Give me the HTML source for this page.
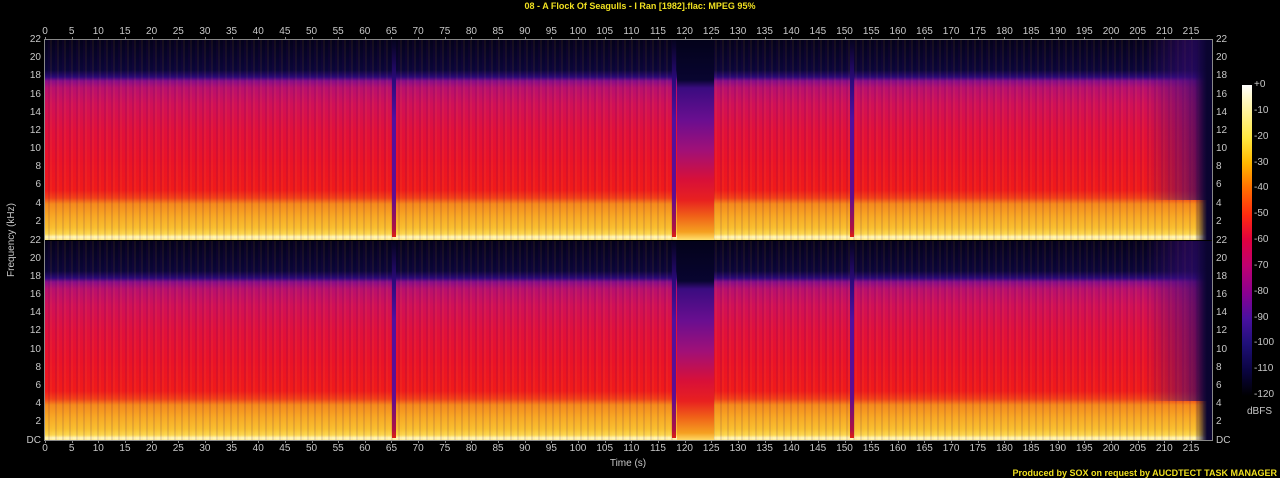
<!DOCTYPE html>
<html><head><meta charset="utf-8"><style>
body{margin:0;width:1280px;height:478px;background:#000;overflow:hidden;position:relative;font-family:"Liberation Sans",sans-serif}
.t{position:absolute;color:#c8c8c8;font-size:10px;line-height:10px;white-space:nowrap}
.ch{position:absolute;left:45px;width:1167px;height:200px;overflow:hidden;
background:linear-gradient(to bottom,#04021a 0%,#0a0638 15%,#2a0a78 18.5%,#8a0e88 20.5%,#b8106e 24%,#d01058 32%,#e0103c 45%,#ea1228 60%,#f01a1a 75%,#f24018 79%,#f58a1c 82%,#f8a824 88%,#f9c030 94%,#fcd850 97%,#fff8c0 98.5%,#ffe880 100%)}
.str{position:absolute;inset:0;background:repeating-linear-gradient(90deg,rgba(0,0,0,0) 0px,rgba(0,0,0,0) 3px,rgba(60,0,90,.22) 4px,rgba(0,0,0,0) 5px,rgba(255,160,40,.14) 6px,rgba(0,0,0,0) 7px)}
.gap{position:absolute;left:632px;width:37px;top:0;height:200px;background:linear-gradient(to bottom,#03021a 0%,#080530 20%,#3a0c80 24%,#6a0e90 40%,#a01078 55%,#d81038 70%,#e82020 80%,#f06018 88%,#f5a020 96%,#ffe070 100%)}
.dl{position:absolute;top:0;height:197px;width:4px;background:linear-gradient(to bottom,#05031f 0%,#2a0a7a 20%,#5010a0 40%,#600e90 80%,#b01040 96%,#e02010 100%)}
.end{position:absolute;left:1100px;width:67px;top:0;height:160px;background:linear-gradient(90deg,rgba(60,12,120,0) 0%,rgba(60,12,120,.5) 60%,rgba(30,8,90,.9) 100%)}
.endb{position:absolute;left:1150px;width:17px;top:0;height:200px;background:linear-gradient(90deg,rgba(10,4,40,0),#0a0430 70%)}
</style></head><body>
<div class="t" style="left:0;width:1280px;text-align:center;top:1px;color:#f0e020;font-weight:bold;font-size:9px">08 - A Flock Of Seagulls - I Ran [1982].flac: MPEG 95%</div>
<div class="ch" style="top:40px"><div class="str"></div><div class="gap"></div><div class="dl" style="left:347px"></div><div class="dl" style="left:627px"></div><div class="dl" style="left:805px"></div><div class="end"></div><div class="endb"></div></div>
<div class="ch" style="top:241px"><div class="str"></div><div class="gap"></div><div class="dl" style="left:347px"></div><div class="dl" style="left:627px"></div><div class="dl" style="left:805px"></div><div class="end"></div><div class="endb"></div></div>
<div style="position:absolute;left:44px;top:39px;width:1px;height:402px;background:#888"></div>
<div style="position:absolute;left:1212px;top:39px;width:1px;height:402px;background:#888"></div>
<div style="position:absolute;left:44px;top:39px;width:1169px;height:1px;background:#888"></div>
<div style="position:absolute;left:44px;top:440px;width:1169px;height:1px;background:#888"></div>
<div style="position:absolute;left:1242px;top:85px;width:10px;height:311px;background:linear-gradient(to bottom,#ffffff 0%,#fff8c0 5%,#ffe840 17%,#ffb800 25%,#ff7000 33%,#ff2a10 42%,#e00040 50%,#c00070 58%,#8a0090 67%,#4a10a0 75%,#20107a 83%,#0a0440 92%,#000000 100%)"></div>
<div class="t" style="left:1247px;top:407px">dBFS</div>
<div class="t" style="left:-28px;top:235px;width:80px;text-align:center;transform:rotate(-90deg)">Frequency (kHz)</div>
<div class="t" style="left:0;width:1256px;text-align:center;top:459px">Time (s)</div>
<div class="t" style="right:3px;top:468px;color:#f0e020;font-weight:bold;font-size:9px">Produced by SOX on request by AUCDTECT TASK MANAGER</div>
<div id="lab"></div>
<script>
var h='';
function L(x,y,s,al){h+='<div class="t" style="left:'+x+'px;top:'+y+'px;'+(al?'transform:translateX(-100%)':'')+'">'+s+'</div>';}
function C(x,y,s){h+='<div class="t" style="left:'+x+'px;top:'+y+'px;transform:translateX(-50%)">'+s+'</div>';}
var pps=(1191-45)/215;
for(var s=0;s<=215;s+=5){var x=45+s*pps;C(x,27,s);C(x,444,s);
h+='<div style="position:absolute;left:'+Math.round(x)+'px;top:37px;width:1px;height:2px;background:#888"></div>';
h+='<div style="position:absolute;left:'+Math.round(x)+'px;top:441px;width:1px;height:2px;background:#888"></div>';}
for(var c=0;c<2;c++){var t0=40+c*200.5;
for(var k=22;k>=(c?0:2);k-=2){var y=t0+(22-k)*200/22;var s2=k==0?'DC':k;
L(41,y-5,s2,true);L(1216,y-5,s2,false);}}
for(var d=0;d<=12;d++){var y=85+d*310/12;L(1254,y-5,d==0?'+0':'-'+d*10,false);}
document.getElementById('lab').innerHTML=h;
</script>
</body></html>
